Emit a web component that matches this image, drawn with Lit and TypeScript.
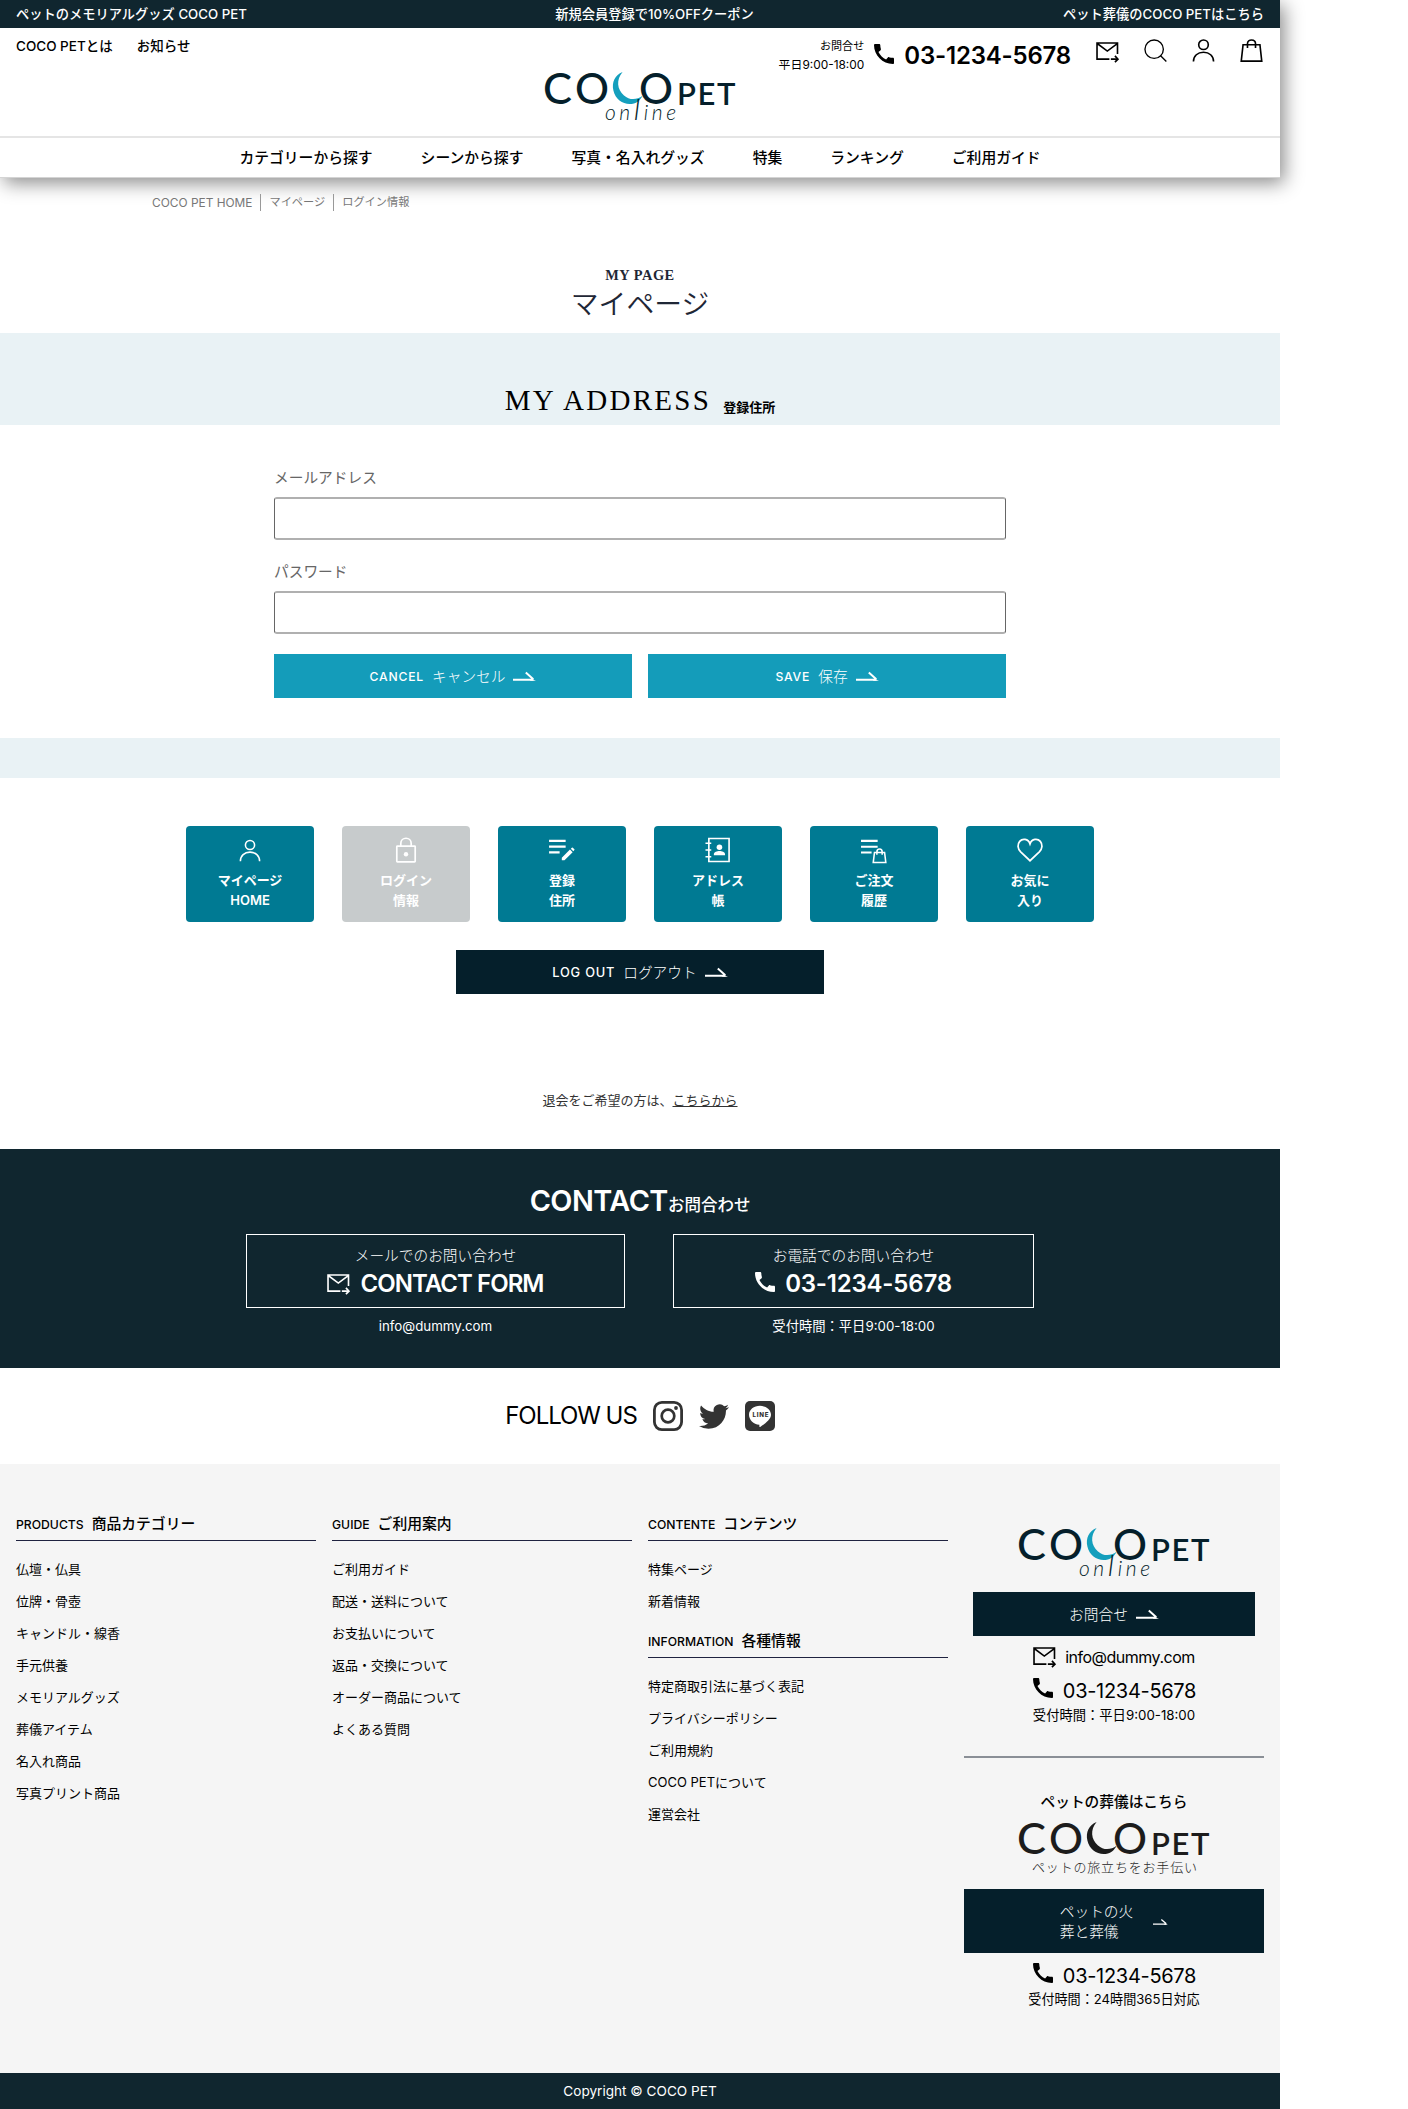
import { LitElement, html, css, svg } from "lit";
import { customElement, property } from "lit/decorators.js";

const ICONS: Record<string, unknown> = {
  phone: svg`<svg viewBox="3 3 18 18" fill="currentColor"><path d="M20.01 15.38c-1.23 0-2.42-.2-3.53-.56-.35-.12-.74-.03-1.01.24l-1.57 1.97c-2.83-1.35-5.48-3.9-6.89-6.83l1.95-1.66c.27-.28.35-.67.24-1.02-.37-1.11-.56-2.3-.56-3.53 0-.54-.45-.99-.99-.99H4.19C3.65 3 3 3.24 3 3.99 3 13.28 10.73 21 20.01 21c.71 0 .99-.63.99-1.18v-3.45c0-.54-.45-.99-.99-.99z"/></svg>`,
  mail: svg`<svg viewBox="0 0 24 21" fill="none" stroke="currentColor" stroke-width="1.7"><path d="M14 18H1V1h21.5v11.5M1.2 1.6L11.8 9.5L22.3 1.6M15.5 18h7"/><path d="M19.8 14.6l3.2 3.4l-3.2 3.2"/></svg>`,
  search: svg`<svg viewBox="0 0 24 24" fill="none" stroke="currentColor" stroke-width="1.4"><circle cx="10.6" cy="10.6" r="9.6"/><path d="M17.3 17.5l6 6"/></svg>`,
  person: svg`<svg viewBox="0 0 24 24" fill="none" stroke="currentColor" stroke-width="1.7"><circle cx="12" cy="6" r="5"/><path d="M1.5 23.6c0-6 4.5-9.8 10.5-9.8s10.5 3.8 10.5 9.8"/></svg>`,
  bag: svg`<svg viewBox="0 0 24 24" fill="none" stroke="currentColor" stroke-width="1.7"><path d="M3.2 6h17.600l1.900 17.100H1.300zM7.800 9.500V5c0-5.200 8.400-5.200 8.400 0v4.500"/></svg>`,
  lock: svg`<svg viewBox="0 0 24 26" fill="none" stroke="currentColor" stroke-width="1.7"><rect x="2.8" y="9.2" width="18.4" height="15.6" rx=".6"/><path d="M6.8 9V6.500c0-7 10.400-7 10.400 0V9"/><circle cx="12" cy="17.2" r="2.2" fill="currentColor" stroke="none"/></svg>`,
  edit: svg`<svg viewBox="0 0 27 24"><path d="M0 2h17.300M0 8h17.300M0 14h11" stroke="currentColor" stroke-width="2.2"/><path d="M13.300 19.600L21.800 11l2.800 2.800l-8.500 8.500h-2.800zM22.700 10.100l1.100-1.100q.5-.4 1 0l1.600 1.600q.5.500 0 1l-1.100 1.200z" fill="currentColor"/></svg>`,
  book: svg`<svg viewBox="0 0 27 26"><path d="M4 1h21v24H4zM.5 6h6M.5 13h6M.5 20h6" fill="none" stroke="currentColor" stroke-width="1.7"/><circle cx="15" cy="10.2" r="2.9" fill="currentColor"/><path d="M9.200 18.500v-1.300c0-2 3.300-3.200 5.800-3.200s5.800 1.200 5.800 3.200v1.300z" fill="currentColor"/></svg>`,
  order: svg`<svg viewBox="0 0 27 26"><path d="M0 2h17.300M0 8h17.300M0 14h11" stroke="currentColor" stroke-width="2.2"/><path d="M14 14h10.500l1.300 10.500H12.700zM16.500 16.500v-3c0-4 5.500-4 5.500 0v3" fill="none" stroke="currentColor" stroke-width="1.6"/></svg>`,
  heart: svg`<svg viewBox="0 0 27 25" fill="none" stroke="currentColor" stroke-width="1.8"><path d="M13.500 5.600C11.500 0 5.500-.2 2.800 3c-2.600 3.100-2.300 7.600 1 10.900l9.700 9.200l9.700-9.200c3.300-3.300 3.600-7.800 1-10.900c-2.700-3.200-8.700-3-10.700 2.600z"/></svg>`,
  arrow: svg`<svg viewBox="0 0 23 9"><path d="M0 7.700h20.500M12.800.6l7.500 6.700" fill="none" stroke="currentColor" stroke-width="2"/><path d="M18 6.700l5 2H17z" fill="currentColor"/></svg>`,
  instagram: svg`<svg viewBox="0 0 30 30" fill="none" stroke="currentColor"><rect x="1.4" y="1.4" width="27.2" height="27.2" rx="7.5" stroke-width="2.8"/><circle cx="15" cy="15" r="6.3" stroke-width="2.7"/><circle cx="23" cy="7" r="1.9" fill="currentColor" stroke="none"/></svg>`,
  twitter: svg`<svg viewBox="0 2 24 20" fill="currentColor"><path d="M23.953 4.570a10 10 0 01-2.825.775 4.958 4.958 0 002.163-2.723c-.951.555-2.005.959-3.127 1.184a4.920 4.920 0 00-8.384 4.482C7.690 8.095 4.067 6.130 1.640 3.162a4.822 4.822 0 00-.666 2.475c0 1.710.870 3.213 2.188 4.096a4.904 4.904 0 01-2.228-.616v.060a4.923 4.923 0 003.946 4.827 4.996 4.996 0 01-2.212.085 4.936 4.936 0 004.604 3.417 9.867 9.867 0 01-6.102 2.105c-.390 0-.779-.023-1.170-.067a13.995 13.995 0 007.557 2.209c9.053 0 13.998-7.496 13.998-13.985 0-.210 0-.420-.015-.630A9.935 9.935 0 0024 4.590z"/></svg>`,
  line: svg`<svg viewBox="0 0 30 30"><rect width="30" height="30" rx="5" fill="currentColor"/><path d="M15 4.800c6.100 0 11 4 11 8.900c0 4.500-5.500 8.600-10.800 12.200c-1 .5-.9-.4-.8-2.200C8.300 23.300 4 18.600 4 13.700c0-4.900 4.900-8.900 11-8.900z" fill="#fff"/><text x="15" y="16.2" text-anchor="middle" font-family="Inter" font-weight="800" font-size="6.2" fill="currentColor" textLength="15">LINE</text></svg>`,
};

@customElement("pet-icon")
export class PetIcon extends LitElement {
  @property() name = "";
  static styles = css`
    :host { display: block; flex: none; }
    svg { display: block; width: 100%; height: 100%; overflow: visible; }
  `;
  render() {
    return ICONS[this.name];
  }
}

@customElement("pet-logo")
export class PetLogo extends LitElement {
  @property() variant = "online";
  static styles = css`
    :host { display: block; flex: none; width: 190px; height: 50px; color: #051f2b; }
    :host([variant="mono"]) { color: #1c1c1c; }
    svg { display: block; width: 190px; height: 50px; overflow: visible; }
    .round { font: 500 43px Lato, sans-serif; }
    .pet { font: 600 31px Lato, sans-serif; }
    .script { font: italic 300 21px Lato, sans-serif; }
    .tag { font: 300 13px "Noto Sans CJK JP", sans-serif; }
  `;
  render() {
    const online = this.variant !== "mono";
    return html`<svg viewBox="0 0 190 50" fill="currentColor">
      <text class="round" x="-2" y="31.5" textLength="29" lengthAdjust="spacingAndGlyphs">C</text>
      <text class="round" x="30" y="31.5" textLength="34" lengthAdjust="spacingAndGlyphs">O</text>
      <path d="M77.600 0C70 3 66.500 10 68.400 18.500C71 30.500 84 35.500 93 29.500C95 28 97 25.300 97.600 23.800C92 28 84.500 28.500 79 23.500C72 17.500 71 7.500 77.600 0z" fill=${online ? "#149fbd" : "currentColor"}></path>
      <text class="round" x="94" y="31.5" textLength="34" lengthAdjust="spacingAndGlyphs">O</text>
      <text class="pet" x="132" y="32.5" textLength="58.5">PET</text>
      ${online
        ? svg`<text class="script" x="60" y="48" textLength="71">on<tspan font-size="30">l</tspan>ine</text>`
        : svg`<text class="tag" x="13" y="49.5" textLength="165">ペットの旅立ちをお手伝い</text>`}
    </svg>`;
  }
}

const NAV = ["カテゴリーから探す", "シーンから探す", "写真・名入れグッズ", "特集", "ランキング", "ご利用ガイド"];

const TILES = [
  { icon: "person", lines: ["マイページ", "HOME"] },
  { icon: "lock", lines: ["ログイン", "情報"], off: true },
  { icon: "edit", lines: ["登録", "住所"] },
  { icon: "book", lines: ["アドレス", "帳"] },
  { icon: "order", lines: ["ご注文", "履歴"] },
  { icon: "heart", lines: ["お気に", "入り"] },
];

const COLUMNS = [
  [{ en: "PRODUCTS", ja: "商品カテゴリー", items: ["仏壇・仏具", "位牌・骨壺", "キャンドル・線香", "手元供養", "メモリアルグッズ", "葬儀アイテム", "名入れ商品", "写真プリント商品"] }],
  [{ en: "GUIDE", ja: "ご利用案内", items: ["ご利用ガイド", "配送・送料について", "お支払いについて", "返品・交換について", "オーダー商品について", "よくある質問"] }],
  [
    { en: "CONTENTE", ja: "コンテンツ", items: ["特集ページ", "新着情報"] },
    { en: "INFORMATION", ja: "各種情報", items: ["特定商取引法に基づく表記", "プライバシーポリシー", "ご利用規約", "COCO PETについて", "運営会社"] },
  ],
];

@customElement("app-root")
export class AppRoot extends LitElement {
  static styles = css`
    * { box-sizing: border-box; margin: 0; }
    :host {
      display: block; width: 1280px; height: 2109px; background: #fff; color: #000;
      font-family: Inter, "Noto Sans CJK JP", sans-serif; font-size: 13.300px; line-height: 20px;
    }
    a { color: inherit; text-decoration: none; white-space: nowrap; }
    ul { list-style: none; padding: 0; }

    header { height: 178px; background: #fff; box-shadow: 4px 5px 18px rgba(0, 0, 0, 0.46); border-bottom: 1px solid #d4d4d4; }
    .promo { height: 28px; padding: 0 16px; background: #10262f; color: #fff; font-size: 13.250px; font-weight: 500; display: grid; grid-template-columns: 1fr auto 1fr; align-items: center; }
    .promo :last-child { text-align: right; }
    .promo :nth-child(2) { padding-left: 29px; }
    .head { height: 108px; display: grid; grid-template-columns: 1fr 190px 1fr; }
    .head-left { display: flex; gap: 24px; padding: 8px 0 0 16px; font-weight: 500; font-size: 13.500px; }
    .head-logo { padding-top: 44px; }
    .head-right { display: flex; justify-content: flex-end; align-items: flex-start; padding: 10px 17px 0 0; }
    .hours { font-size: 11.100px; line-height: 17.500px; text-align: right; white-space: nowrap; margin-right: 10px; }
    .hours .big { font-size: 11.900px; }
    .tel-big { font-size: 24px; font-weight: 600; line-height: 34px; margin: 1px 25px 0 10px; white-space: nowrap; letter-spacing: -0.200px; }
    .i20 { width: 20px; height: 20px; }
    .head-phone { margin-top: 6px; }
    .tools { display: flex; gap: 25px; padding-top: 1px; }
    .tool { width: 23px; height: 23px; }
    .tool.mail { height: 20px; margin-top: 3px; }
    nav { height: 41px; border-top: 2px solid #e5e5e5; display: flex; justify-content: center; align-items: center; gap: 48px; font-size: 14.800px; font-weight: 500; padding-top: 1px; }

    .crumbs { height: 82px; padding: 16px 0 0 152px; display: flex; align-items: flex-start; color: #777; font-size: 11.200px; line-height: 17px; }
    .crumbs a { padding-right: 8px; margin-right: 8px; border-right: 1px solid #999; }
    .crumbs .first { font-size: 11.900px; }
    .crumbs a:last-child { border: 0; }

    .title { height: 73px; text-align: center; color: #1f2736; }
    .title-en { font: bold 14.400px/20px "Liberation Serif", serif; letter-spacing: 0.500px; padding-top: 5px; }
    .title h1 { font-size: 27.800px; font-weight: 350; line-height: 36px; padding-top: 1px; }
    .band { background: #e9f2f5; }
    .band.top { height: 92px; display: flex; justify-content: center; align-items: baseline; padding-top: 49px; }
    .band.top h2 { font: 400 29px/36px "Liberation Serif", serif; letter-spacing: 2.300px; margin-right: 12px; }
    .band.top span { font-size: 13px; font-weight: 700; position: relative; top: 2px; }
    .band.thin { height: 40px; margin-top: 40px; }

    form { width: 732px; margin: 0 auto; padding-top: 43px; }
    .field { height: 94px; display: block; color: #666; font-size: 14.700px; }
    .field input { display: block; width: 100%; height: 43px; margin-top: 9px; border: solid; border-width: 2px 1px; border-color: #b0b0b0 #666; border-radius: 3px; background: #fff; }
    .buttons { display: grid; grid-template-columns: 1fr 1fr; gap: 16px; margin-top: -2px; }
    .btn { height: 44px; display: flex; justify-content: center; align-items: center; gap: 8px; color: #fff; background: #149cba; font-size: 14.700px; font-weight: 300; padding-top: 1px; }
    .btn small { font-size: 12.200px; font-weight: 500; letter-spacing: 0.800px; }
    .btn pet-icon { width: 23px; height: 9px; }
    .btn.dark { background: #051f2b; }

    .tiles { display: flex; justify-content: center; gap: 28px; padding-top: 48px; }
    .tile { width: 128px; height: 96px; border-radius: 4px; background: #007a93; color: #fff; display: flex; flex-direction: column; align-items: center; padding-top: 11px; font-size: 13px; font-weight: 600; text-align: center; }
    .tile.off { background: #c7cbcc; }
    .tile pet-icon { width: 26px; height: 26px; margin-bottom: 7px; }
    .tile pet-icon[name="person"] { width: 22px; }
    .tile pet-icon[name="person"], .tile pet-icon[name="heart"] { height: 25px; margin: 1px 0 7px; }
    .tile pet-icon[name="edit"] { height: 23px; margin: 2px 0 8px; }
    .tile pet-icon[name="order"] { height: 25px; margin: 2px 0 6px; }
    .logout { width: 368px; margin: 28px auto 0; }
    .logout small { font-size: 12.800px; }
    .leave { height: 155px; padding-top: 96px; text-align: center; color: #333; font-size: 13px; }
    .leave a { text-decoration: underline; }

    .contact { height: 219px; background: #10262f; color: #fff; padding-top: 33px; }
    .contact h2 { display: flex; justify-content: center; align-items: baseline; font-size: 28.800px; line-height: 37px; font-weight: 600; letter-spacing: -0.500px; }
    .contact h2 span { font-size: 16.500px; font-weight: 500; letter-spacing: 0; }
    .contact-row { display: flex; gap: 48px; padding: 10px 0 0 246px; text-align: center; }
    .mail-way { width: 379px; }
    .tel-way { width: 361px; }
    .way-box { height: 74px; border: 1px solid #fff; padding-top: 11px; font-size: 14.700px; font-weight: 300; }
    .way-main { display: flex; justify-content: center; align-items: center; gap: 10px; font-size: 24px; line-height: 34px; font-weight: 600; letter-spacing: -0.200px; padding-top: 1px; }
    .way-main.form { letter-spacing: -0.950px; }
    .way-box pet-icon { width: 20px; height: 20px; margin-top: -4px; }
    .way-box pet-icon.mail { width: 23px; margin-top: 0; }
    .way-sub { padding-top: 8px; }

    .follow { height: 96px; display: flex; justify-content: center; align-items: center; font-size: 24px; color: #000; letter-spacing: -1.050px; }
    .follow pet-icon { width: 30px; height: 30px; margin-left: 16px; color: #333; }
    .follow pet-icon.tw { height: 25px; }

    .foot { height: 609px; background: #f5f5f5; padding: 48px 16px 0; display: grid; grid-template-columns: repeat(4, 300px); gap: 16px; align-items: start; }
    .foot h3 { height: 29px; display: flex; align-items: baseline; gap: 8px; border-bottom: 1px solid #1f2340; font-size: 14.800px; line-height: 25px; font-weight: 500; }
    .foot h3 small { font-size: 12.200px; font-weight: 500; }
    .foot ul { padding: 12px 0 12px; }
    .foot li { height: 32px; line-height: 32px; font-size: 13px; }
    .side { padding-top: 16px; display: flex; flex-direction: column; align-items: center; white-space: nowrap; }
    .side .ask { width: 282px; margin-top: 14px; }
    .line-row { display: flex; align-items: center; }
    .mail-row { height: 30px; gap: 9px; margin-top: 6px; font-size: 16px; letter-spacing: -0.500px; }
    .mail-row pet-icon { width: 23px; height: 20px; }
    .tel-row { height: 34px; gap: 10px; font-size: 20px; letter-spacing: -0.300px; padding: 4px 0 0 1px; }
    .tel-row pet-icon { margin-top: -6px; }
    .side .open { margin-top: -1px; }
    .side hr { width: 300px; height: 2px; border: 0; background: #8a8f96; margin: 31px 0 34px; }
    .side h4 { font-size: 14.700px; font-weight: 500; }
    .side .mono { margin-top: 10px; }
    .side .wide { width: 300px; height: 64px; margin: 17px 0 4px; gap: 20px; line-height: 20px; }
    .side .late { margin-top: -2px; font-size: 13.100px; }
    .wide pet-icon { width: 15px; height: 6px; }
    .copy { height: 36px; background: #10262f; color: #fff; text-align: center; line-height: 37px; font-size: 13.600px; }
  `;

  render() {
    return html`
      <header>
        <div class="promo"><a>ペットのメモリアルグッズ COCO PET</a><a>新規会員登録で10%OFFクーポン</a><a>ペット葬儀のCOCO PETはこちら</a></div>
        <div class="head">
          <div class="head-left"><a>COCO PETとは</a><a>お知らせ</a></div>
          <pet-logo class="head-logo"></pet-logo>
          <div class="head-right">
            <div class="hours">お問合せ<br /><span class="big">平日9:00-18:00</span></div>
            <pet-icon class="i20 head-phone" name="phone"></pet-icon>
            <div class="tel-big">03-1234-5678</div>
            <div class="tools">
              <pet-icon class="tool mail" name="mail"></pet-icon>
              <pet-icon class="tool" name="search"></pet-icon>
              <pet-icon class="tool" name="person"></pet-icon>
              <pet-icon class="tool" name="bag"></pet-icon>
            </div>
          </div>
        </div>
        <nav>${NAV.map((n) => html`<a>${n}</a>`)}</nav>
      </header>
      <div class="crumbs"><a class="first">COCO PET HOME</a><a>マイページ</a><a>ログイン情報</a></div>
      <div class="title"><div class="title-en">MY PAGE</div><h1>マイページ</h1></div>
      <div class="band top"><h2>MY ADDRESS</h2><span>登録住所</span></div>
      <form>
        <label class="field">メールアドレス<input type="email" /></label>
        <label class="field">パスワード<input type="password" /></label>
        <div class="buttons">
          <a class="btn"><small>CANCEL</small>キャンセル<pet-icon name="arrow"></pet-icon></a>
          <a class="btn"><small>SAVE</small>保存<pet-icon name="arrow"></pet-icon></a>
        </div>
      </form>
      <div class="band thin"></div>
      <div class="tiles">
        ${TILES.map((t) => html`<a class="tile ${t.off ? "off" : ""}"><pet-icon name=${t.icon}></pet-icon>${t.lines[0]}<br />${t.lines[1]}</a>`)}
      </div>
      <a class="btn dark logout"><small>LOG OUT</small>ログアウト<pet-icon name="arrow"></pet-icon></a>
      <p class="leave">退会をご希望の方は、<a>こちらから</a></p>
      <section class="contact">
        <h2>CONTACT<span>お問合わせ</span></h2>
        <div class="contact-row">
          <div class="mail-way">
            <div class="way-box">メールでのお問い合わせ<div class="way-main form"><pet-icon class="mail" name="mail"></pet-icon>CONTACT FORM</div></div>
            <div class="way-sub">info@dummy.com</div>
          </div>
          <div class="tel-way">
            <div class="way-box">お電話でのお問い合わせ<div class="way-main"><pet-icon name="phone"></pet-icon>03-1234-5678</div></div>
            <div class="way-sub">受付時間：平日9:00-18:00</div>
          </div>
        </div>
      </section>
      <section class="follow">FOLLOW US<pet-icon name="instagram"></pet-icon><pet-icon class="tw" name="twitter"></pet-icon><pet-icon name="line"></pet-icon></section>
      <footer>
        <div class="foot">
          ${COLUMNS.map((col) => html`<div>${col.map((g) => html`<h3><small>${g.en}</small>${g.ja}</h3><ul>${g.items.map((i) => html`<li>${i}</li>`)}</ul>`)}</div>`)}
          <div class="side">
            <pet-logo></pet-logo>
            <a class="btn dark ask">お問合せ<pet-icon name="arrow"></pet-icon></a>
            <div class="line-row mail-row"><pet-icon name="mail"></pet-icon>info@dummy.com</div>
            <div class="line-row tel-row"><pet-icon class="i20" name="phone"></pet-icon>03-1234-5678</div>
            <div class="open">受付時間：平日9:00-18:00</div>
            <hr />
            <h4>ペットの葬儀はこちら</h4>
            <pet-logo class="mono" variant="mono"></pet-logo>
            <a class="btn dark wide"><span>ペットの火<br />葬と葬儀</span><pet-icon name="arrow"></pet-icon></a>
            <div class="line-row tel-row"><pet-icon class="i20" name="phone"></pet-icon>03-1234-5678</div>
            <div class="late">受付時間：24時間365日対応</div>
          </div>
        </div>
        <div class="copy">Copyright © COCO PET</div>
      </footer>
    `;
  }
}
